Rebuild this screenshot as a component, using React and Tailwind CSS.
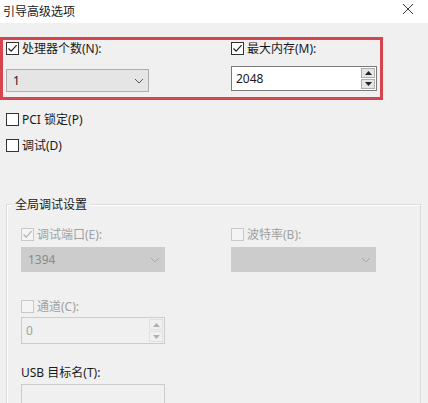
import React from "react";

const FONT = { fontFamily: '"Noto Sans", "Noto Sans CJK SC", sans-serif' };

function Check({ checked, disabled }) {
  return (
    <div
      className={`w-[13px] h-[13px] border flex items-center justify-center shrink-0 ${
        disabled ? "border-[#c8c8c8] bg-[#f4f4f4]" : "border-[#333333] bg-white"
      }`}
    >
      {checked && (
        <svg width="11" height="11" viewBox="0 0 11 11">
          <path
            d="M1.5 5.5 L4.2 8.2 L9.6 2.2"
            fill="none"
            stroke={disabled ? "#b0b0b0" : "#222"}
            strokeWidth="1.2"
          />
        </svg>
      )}
    </div>
  );
}

function CheckLabel({ checked, disabled, children }) {
  return (
    <div className="flex items-center gap-[3px] h-[15px]">
      <Check checked={checked} disabled={disabled} />
      <span
        className={`text-[12px] leading-[15px] ${disabled ? "text-[#a0a0a0]" : "text-[#1a1a1a]"}`}
      >
        {children}
      </span>
    </div>
  );
}

function Chevron({ color }) {
  return (
    <svg width="10" height="6" viewBox="0 0 10 6">
      <path d="M1 1 L5 5 L9 1" fill="none" stroke={color} strokeWidth="1" />
    </svg>
  );
}

function Select({ value, disabled, w, h }) {
  return (
    <div
      className={`flex items-center justify-between border pl-[6px] pr-[4px] ${
        disabled ? "bg-[#cccccc] border-[#cccccc] text-[#8a8a8a]" : "bg-[#e5e5e5] border-[#adadad] text-[#1a1a1a]"
      }`}
      style={{ width: w, height: h }}
    >
      <span className="text-[12px]">{value}</span>
      <Chevron color={disabled ? "#a8a8a8" : "#555"} />
    </div>
  );
}

function Tri({ up, color }) {
  return (
    <svg width="7" height="4" viewBox="0 0 7 4">
      <path d={up ? "M0 4 L3.5 0 L7 4 Z" : "M0 0 L3.5 4 L7 0 Z"} fill={color} />
    </svg>
  );
}

function Spinner({ value, disabled, w, h }) {
  return (
    <div
      className={`flex border ${disabled ? "bg-[#f0f0f0] border-[#cccccc] text-[#a0a0a0]" : "bg-white border-[#7a7a7a] text-[#1a1a1a]"}`}
      style={{ width: w, height: h }}
    >
      <div className="flex-1 flex items-center pl-[4px] text-[12px]">{value}</div>
      <div className="w-[16px] flex flex-col p-[1px] gap-[1px]">
        <div
          className={`flex-1 flex items-center justify-center border ${
            disabled ? "border-[#e0e0e0] bg-[#f0f0f0]" : "border-[#adadad] bg-[#e5e5e5]"
          }`}
        >
          <Tri up color={disabled ? "#b0b0b0" : "#222"} />
        </div>
        <div
          className={`flex-1 flex items-center justify-center border ${
            disabled ? "border-[#e0e0e0] bg-[#f0f0f0]" : "border-[#adadad] bg-[#e5e5e5]"
          }`}
        >
          <Tri color={disabled ? "#b0b0b0" : "#222"} />
        </div>
      </div>
    </div>
  );
}

export default function App() {
  return (
    <div className="w-[428px] h-[403px] overflow-hidden bg-[#f0f0f0] flex flex-col" style={FONT}>
      {/* Title bar */}
      <div className="h-[23px] bg-white flex items-center justify-between shrink-0">
        <span className="pl-[3px] text-[12px] text-[#1a1a1a] leading-none">引导高级选项</span>
        <svg width="12" height="12" viewBox="0 0 12 12" className="mr-[14px] mt-[-6px]">
          <path d="M1 1 L11 11 M11 1 L1 11" stroke="#333" strokeWidth="1" />
        </svg>
      </div>

      {/* Red highlighted box */}
      <div className="mt-[14px] w-[383px] h-[63px] border-[3px] border-[#d6454d] flex shrink-0">
        <div className="w-[228px] pl-[3px] pt-[1px] flex flex-col">
          <CheckLabel checked>处理器个数(N):</CheckLabel>
          <div className="mt-[13px]">
            <Select value="1" w={143} h={23} />
          </div>
        </div>
        <div className="pt-[1px] flex flex-col">
          <CheckLabel checked>最大内存(M):</CheckLabel>
          <div className="mt-[10px]">
            <Spinner value="2048" w={146} h={25} />
          </div>
        </div>
      </div>

      <div className="pl-[6px] mt-[12px] flex flex-col gap-[11px]">
        <CheckLabel>PCI 锁定(P)</CheckLabel>
        <CheckLabel>调试(D)</CheckLabel>
      </div>

      {/* Group box */}
      <div className="relative ml-[6px] mt-[51px] w-[415px] flex-1 border-t border-l border-r border-[#dcdcdc] shadow-[inset_1px_1px_0_#ffffff]">
        <span className="absolute left-[5px] top-[-8px] bg-[#f0f0f0] px-[3px] text-[12px] leading-[15px] text-[#1a1a1a]">
          全局调试设置
        </span>
        <div className="pl-[14px] pt-[22px] flex">
          <div className="w-[210px] flex flex-col">
            <CheckLabel checked disabled>调试端口(E):</CheckLabel>
            <div className="mt-[5px]">
              <Select value="1394" disabled w={144} h={25} />
            </div>
            <div className="mt-[27px]">
              <CheckLabel disabled>通道(C):</CheckLabel>
            </div>
            <div className="mt-[3px]">
              <Spinner value="0" disabled w={144} h={27} />
            </div>
            <div className="mt-[21px] text-[12px] leading-[15px] text-[#1a1a1a]">USB 目标名(T):</div>
            <div className="mt-[4px] w-[144px] h-[30px] border border-[#cccccc] bg-[#f0f0f0]" />
          </div>
          <div className="flex flex-col">
            <CheckLabel disabled>波特率(B):</CheckLabel>
            <div className="mt-[5px]">
              <Select value="" disabled w={145} h={25} />
            </div>
          </div>
        </div>
      </div>
    </div>
  );
}
